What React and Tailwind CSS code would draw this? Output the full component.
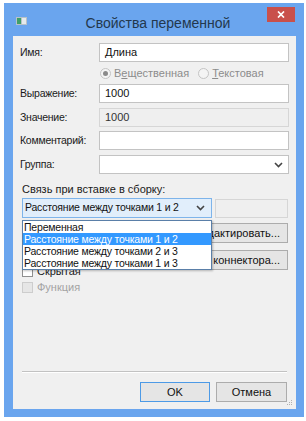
import React from 'react';

const font = { fontFamily: '"Liberation Sans", Arial, sans-serif' };

const items = [
    'Переменная',
    'Расстояние между точками 1 и 2',
    'Расстояние между точками 2 и 3',
    'Расстояние между точками 1 и 3',
];

function Field({ label, value, disabled, mt, chevron }) {
    return (
        <div className={`flex items-center h-[19px] ${mt}`}>
            <div className="w-[86px] pl-[7px] text-[10.5px] tracking-[-0.25px] text-[#1a1a1a]">{label}</div>
            <div
                className={`w-[190px] h-[19px] border flex items-center justify-between px-[5px] text-[11px] ${
                    disabled ? 'bg-[#efefef] border-[#d6d6d6] text-[#333]' : 'bg-white border-[#c3c3c3] text-[#111]'
                }`}
            >
                <span>{value}</span>
                {chevron && (
                    <svg width="9" height="6" viewBox="0 0 9 6">
                        <path d="M1 1 L4.5 4.5 L8 1" fill="none" stroke="#444" strokeWidth="1.6" />
                    </svg>
                )}
            </div>
        </div>
    );
}

function Radio({ checked, children }) {
    return (
        <div className="flex items-center gap-[3px] text-[11px] text-[#8c8c8c]">
            <span className="w-[11px] h-[11px] rounded-full border border-[#c4c4c4] bg-[#f4f4f4] flex items-center justify-center">
                {checked && <span className="w-[5px] h-[5px] rounded-full bg-[#8a8a8a]" />}
            </span>
            {children}
        </div>
    );
}

export default function App() {
    return (
        <div className="w-[306px] h-[421px] bg-white pt-[3px] pl-[4px]" style={font}>
            <div className="w-[300px] h-[414px] bg-[#6aa5ee] flex flex-col">
                {/* Title bar */}
                <div className="h-[33px] flex items-start">
                    <div className="pl-[12px] pt-[14px]">
                        <svg width="11" height="8" viewBox="0 0 11 8">
                            <rect x="0" y="0" width="11" height="8" fill="#b8c2c8" />
                            <rect x="1" y="1" width="4" height="6" fill="#3f9f6a" />
                            <rect x="6" y="1" width="4" height="6" fill="#e6eaec" />
                        </svg>
                    </div>
                    <div className="flex-1 text-center pt-[10px] text-[14px] text-[#23384d] pl-[22px]">
                        Свойства переменной
                    </div>
                    <div className="mt-[4px] mr-[9px] w-[28px] h-[15px] bg-[#c9504b] flex items-center justify-center">
                        <svg width="8" height="7" viewBox="0 0 8 7">
                            <path d="M1 0.5 L7 6.5 M7 0.5 L1 6.5" stroke="#fff" strokeWidth="1.7" />
                        </svg>
                    </div>
                </div>

                {/* Client area */}
                <div className="ml-[9px] mr-[8px] h-[373px] bg-[#f0f0f0] relative flex flex-col">
                    <Field label="Имя:" value="Длина" mt="mt-[7px]" />

                    <div className="flex items-center h-[19px] mt-[2px] pl-[87px] gap-[9px]">
                        <Radio checked>
                            <span>
                                В<span className="underline">е</span>щественная
                            </span>
                        </Radio>
                        <Radio>
                            <span>
                                <span className="underline">Т</span>екстовая
                            </span>
                        </Radio>
                    </div>

                    <Field label="Выражение:" value="1000" mt="mt-[1px]" />
                    <Field label="Значение:" value="1000" disabled mt="mt-[5px]" />
                    <Field label="Комментарий:" value="" mt="mt-[4px]" />
                    <Field label="Группа:" value="" chevron mt="mt-[5px]" />

                    <div className="mt-[8px] pl-[9px] text-[11px] text-[#1a1a1a] leading-[14px]">
                        Связь при вставке в сборку:
                    </div>

                    <div className="mt-[2px] flex items-center pl-[9px] gap-[3px]">
                        <div className="w-[190px] h-[20px] border border-[#7eb4ea] bg-[#e1eefb] flex items-center justify-between pl-[2px] pr-[6px] text-[10.5px] tracking-[-0.2px] text-[#111]">
                            <span>Расстояние между точками 1 и 2</span>
                            <svg width="9" height="6" viewBox="0 0 9 6">
                                <path d="M1 1 L4.5 4.5 L8 1" fill="none" stroke="#444" strokeWidth="1.6" />
                            </svg>
                        </div>
                        <div className="w-[73px] h-[19px] border border-[#d6d6d6] bg-[#efefef]" />
                    </div>

                    <div className="mt-[5px] flex flex-col items-end pr-[8px] gap-[7px]">
                        <div className="h-[20px] border border-[#acacac] bg-[#e5e5e5] px-[7px] flex items-center text-[11px] text-[#111]">
                            Редактировать...
                        </div>
                        <div className="h-[20px] border border-[#acacac] bg-[#e5e5e5] px-[7px] flex items-center text-[11px] text-[#111]">
                            Свойства коннектора...
                        </div>
                    </div>

                    <div className="mt-[-5px] pl-[9px] flex flex-col gap-[4px] text-[11px]">
                        <div className="flex items-center gap-[4px] h-[12px] text-[#1a1a1a]">
                            <span className="w-[11px] h-[11px] border border-[#8f8f8f] bg-white" />
                            Скрытая
                        </div>
                        <div className="flex items-center gap-[4px] h-[12px] text-[#a3a3a3]">
                            <span className="w-[11px] h-[11px] border border-[#cdcdcd] bg-[#e6e6e6]" />
                            Функция
                        </div>
                    </div>

                    <div className="flex-1" />

                    <div className="mx-[9px] h-[2px] border-t border-[#c2c2c2] border-b border-b-white" />

                    <div className="mt-[9px] mb-[7px] flex justify-end gap-[6px] pr-[9px]">
                        <div className="w-[70px] h-[20px] border border-[#4d9ae6] bg-[#e5e5e5] flex items-center justify-center text-[11px] text-[#111]">
                            OK
                        </div>
                        <div className="w-[71px] h-[20px] border border-[#acacac] bg-[#e5e5e5] flex items-center justify-center text-[11px] text-[#111]">
                            Отмена
                        </div>
                    </div>

                    {/* size grip */}
                    <svg className="absolute right-[3px] bottom-[3px]" width="7" height="7" viewBox="0 0 7 7">
                        <rect x="5" y="1" width="1" height="1" fill="#b0b0b0" />
                        <rect x="3" y="3" width="1" height="1" fill="#b0b0b0" />
                        <rect x="5" y="3" width="1" height="1" fill="#b0b0b0" />
                        <rect x="1" y="5" width="1" height="1" fill="#b0b0b0" />
                        <rect x="3" y="5" width="1" height="1" fill="#b0b0b0" />
                        <rect x="5" y="5" width="1" height="1" fill="#b0b0b0" />
                    </svg>

                    {/* open dropdown list */}
                    <div className="absolute left-[9px] top-[184px] w-[190px] border border-[#5a7fa8] bg-white text-[10.5px] tracking-[-0.2px] text-[#111] shadow-[1px_1px_2px_rgba(0,0,0,0.25)]">
                        {items.map((t, i) => (
                            <div
                                key={t}
                                className={`h-[12px] leading-[12px] pl-[1px] ${i === 1 ? 'bg-[#3399ff] text-white' : ''}`}
                            >
                                {t}
                            </div>
                        ))}
                    </div>
                </div>
            </div>
        </div>
    );
}
